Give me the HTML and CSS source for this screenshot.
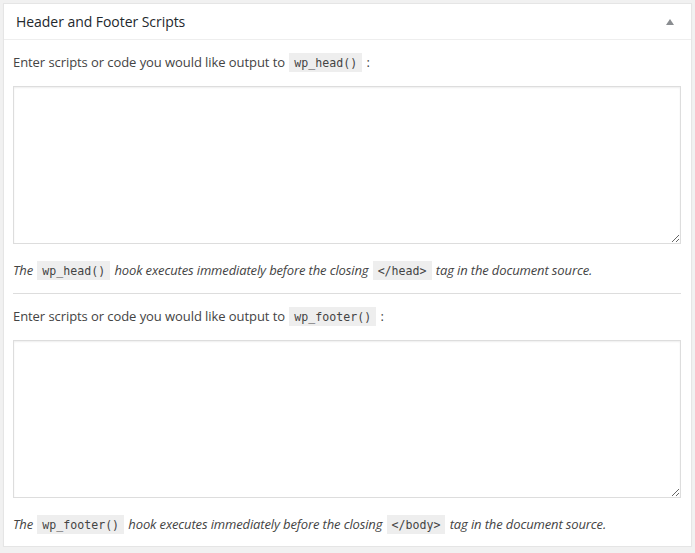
FILE: index.html
```html
<!DOCTYPE html>
<html>
<head>
<meta charset="utf-8">
<link rel="stylesheet" href="styles.css">
</head>
<body>
<div class="postbox">
  <div class="postbox-header">
    <h2 class="hndle">Header and Footer Scripts</h2>
    <span class="toggle" aria-hidden="true"></span>
  </div>
  <div class="inside">
    <p class="label">Enter scripts or code you would like output to <code>wp_head()</code> :</p>
    <textarea class="code-area"></textarea>
    <p class="description">The <code>wp_head()</code> hook executes immediately before the closing <code>&lt;/head&gt;</code> tag in the document source.</p>
    <hr class="sep">
    <p class="label">Enter scripts or code you would like output to <code>wp_footer()</code> :</p>
    <textarea class="code-area"></textarea>
    <p class="description">The <code>wp_footer()</code> hook executes immediately before the closing <code>&lt;/body&gt;</code> tag in the document source.</p>
  </div>
</div>
</body>
</html>
```
FILE: styles.css
```css
html, body {
  margin: 0;
  padding: 0;
  background: #f1f1f1;
}
body {
  padding: 3px 3px 0 3px;
  font-family: "Open Sans", "Noto Sans", sans-serif;
  font-size: 13px;
  color: #444;
}
.postbox {
  width: 687px;
  background: #fff;
  border: 1px solid #e5e5e5;
  box-shadow: 0 1px 1px rgba(0,0,0,.04);
}
.postbox-header {
  display: flex;
  align-items: center;
  justify-content: space-between;
  height: 35px;
  border-bottom: 1px solid #eee;
  padding: 0 12px 0 12px;
}
.hndle {
  margin: 0;
  font-size: 14px;
  font-weight: 400;
  color: #23282d;
  line-height: 20px;
  letter-spacing: -0.05px;
}
.toggle {
  width: 0;
  height: 0;
  border-left: 4.5px solid transparent;
  border-right: 4.5px solid transparent;
  border-bottom: 6px solid #8a8d91;
  margin-right: 5px;
  margin-top: 1px;
}
.inside {
  padding: 12px 9px 10px 9px;
  display: flex;
  flex-direction: column;
}
.label {
  margin: 0 0 12px 0;
  line-height: 21px;
  letter-spacing: -0.07px;
}
code {
  font-family: "DejaVu Sans Mono", "Liberation Mono", monospace;
  font-size: 11.6px;
  font-style: normal;
  letter-spacing: 0;
  background: #eee;
  color: #444;
  padding: 3px 5px 2px 5px;
  margin: 0 1px;
}
.code-area {
  display: block;
  width: 668px;
  height: 158px;
  box-sizing: border-box;
  border: 1px solid #ddd;
  box-shadow: inset 0 1px 2px rgba(0,0,0,.07);
  margin: 0;
  padding: 4px;
  font-family: "Liberation Mono", monospace;
  font-size: 13px;
  background: #fff;
}
.description {
  margin: 16px 0 0 0;
  font-style: italic;
  line-height: 21px;
  color: #444;
  letter-spacing: -0.13px;
}
.sep {
  border: 0;
  border-top: 1px solid #ddd;
  margin: 11px 0 12px 0;
  width: 668px;
}
```
